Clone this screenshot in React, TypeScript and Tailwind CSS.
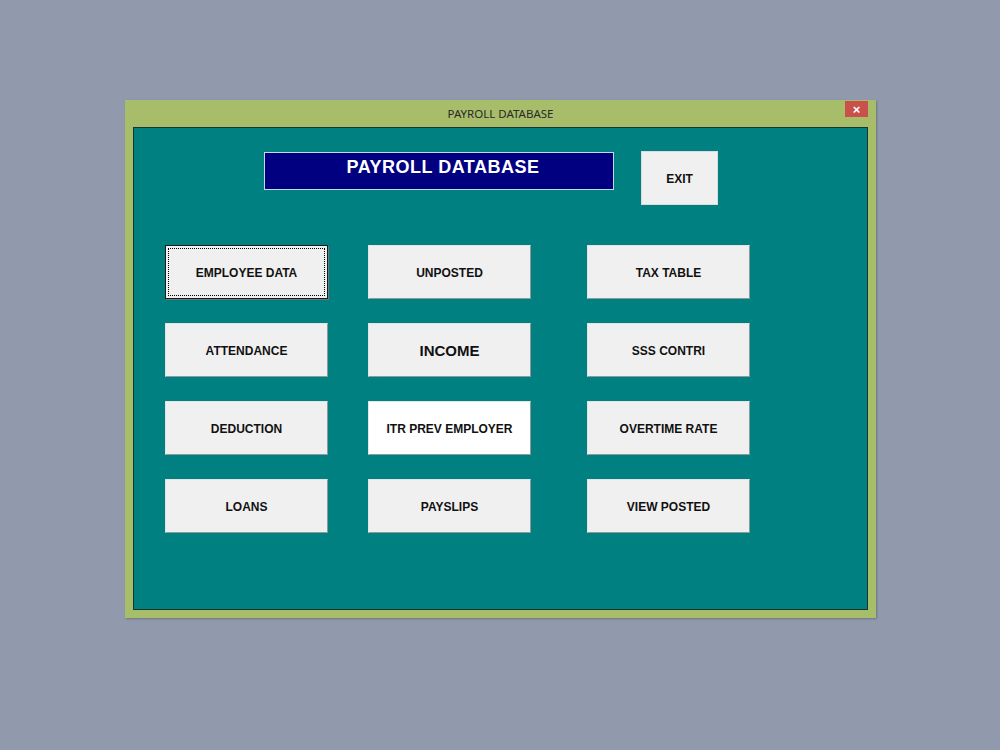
const rows: string[][] = [
  ["EMPLOYEE DATA", "UNPOSTED", "TAX TABLE"],
  ["ATTENDANCE", "INCOME", "SSS CONTRI"],
  ["DEDUCTION", "ITR PREV EMPLOYER", "OVERTIME RATE"],
  ["LOANS", "PAYSLIPS", "VIEW POSTED"],
];

function FormButton({ label }: { label: string }) {
  const focused = label === "EMPLOYEE DATA";
  const white = label === "ITR PREV EMPLOYER";
  const big = label === "INCOME";

  if (focused) {
    return (
      <button className="h-[54px] w-[163px] border border-[#1b1b1b] bg-[#f0f0f0] p-[2px] shadow-[1px_1px_0_#6b7b7b]">
        <span className="flex h-full w-full items-center justify-center border border-dotted border-black pt-[2px] text-[12px] font-bold text-[#111]">
          {label}
        </span>
      </button>
    );
  }

  return (
    <button
      className={`flex h-[54px] w-[163px] items-center justify-center border border-t-[#e4e4e4] border-l-[#e4e4e4] border-b-[#8c9a9a] border-r-[#8c9a9a] pt-[2px] font-bold text-[#111] ${
        white ? "bg-white" : "bg-[#f0f0f0]"
      } ${big ? "text-[15px]" : "text-[12px]"}`}
    >
      {label}
    </button>
  );
}

export default function App() {
  return (
    <div className="min-h-[750px] w-full bg-[#9199ad] pl-[125px] pt-[100px] font-['Liberation_Sans',Arial,sans-serif]">
      <div className="w-[751px] bg-[#a7bd69] shadow-[1px_1px_2px_rgba(0,0,0,0.25)]">
        {/* title bar */}
        <div className="relative flex h-[27px] items-center justify-center">
          <span className="font-['Noto_Sans',sans-serif] text-[11.5px] text-[#2a2a2a]">PAYROLL DATABASE</span>
          <div className="absolute right-[8px] top-[1px] flex h-[16px] w-[23px] items-center justify-center bg-[#c9504b] text-[13px] font-bold leading-none text-white">
            ×
          </div>
        </div>

        <div className="px-[8px] pb-[8px]">
          <div className="h-[483px] border border-[#17342e] bg-[#008080] pl-[31px] pt-[23px]">
            <div className="flex items-start">
              <div className="ml-[99px] mt-[1px] flex h-[38px] w-[350px] items-start justify-center border border-[#c8d8e8] bg-[#000080] pl-[8px] pt-[1px] text-[18px] font-bold tracking-[0.5px] text-white">
                PAYROLL DATABASE
              </div>
              <button className="ml-[27px] flex h-[54px] w-[77px] items-center justify-center border border-[#dcdcdc] bg-[#f0f0f0] pt-[2px] text-[12px] font-bold text-[#111]">
                EXIT
              </button>
            </div>

            <div className="mt-[40px] flex flex-col gap-[24px]">
              {rows.map((row) => (
                <div key={row[0]} className="flex">
                  <FormButton label={row[0]} />
                  <div className="ml-[40px]">
                    <FormButton label={row[1]} />
                  </div>
                  <div className="ml-[56px]">
                    <FormButton label={row[2]} />
                  </div>
                </div>
              ))}
            </div>
          </div>
        </div>
      </div>
    </div>
  );
}
